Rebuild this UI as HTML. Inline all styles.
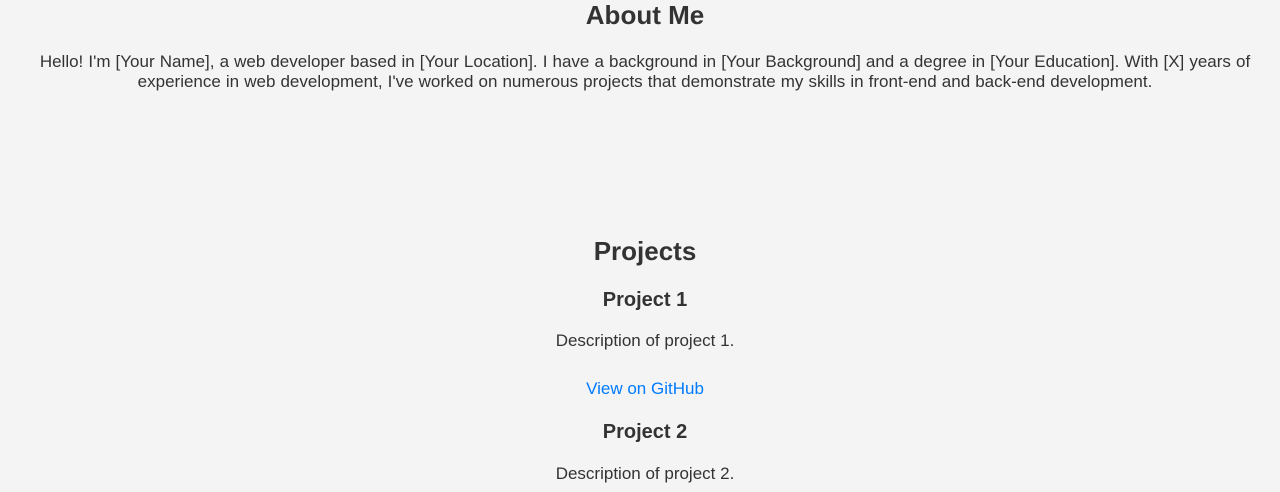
<!DOCTYPE html>
<html><head><meta charset="utf-8"><style>
html,body{margin:0;padding:0;width:1280px;height:492px;overflow:hidden;background:#f4f4f4;color:#333;font-family:"Liberation Sans",Arial,sans-serif}
.c{position:absolute;left:10px;width:1270px;text-align:center;margin:0;white-space:nowrap}
h2.c{font-size:26px;font-weight:bold;line-height:30px}
h3.c{font-size:20px;font-weight:bold;line-height:24px}
p.c{font-size:17px;line-height:20px}
a{color:#007bff;text-decoration:none}
</style></head><body>
<h2 class="c" style="top:0px">About Me</h2>
<p class="c" style="top:52px;word-spacing:0.35px">Hello! I'm [Your Name], a web developer based in [Your Location]. I have a background in [Your Background] and a degree in [Your Education]. With [X] years of<br>experience in web development, I've worked on numerous projects that demonstrate my skills in front-end and back-end development.</p>
<h2 class="c" style="top:236px">Projects</h2>
<h3 class="c" style="top:288px">Project 1</h3>
<p class="c" style="top:331px">Description of project 1.</p>
<p class="c" style="top:379px"><a href="#">View on GitHub</a></p>
<h3 class="c" style="top:420px">Project 2</h3>
<p class="c" style="top:464px">Description of project 2.</p>
</body></html>
